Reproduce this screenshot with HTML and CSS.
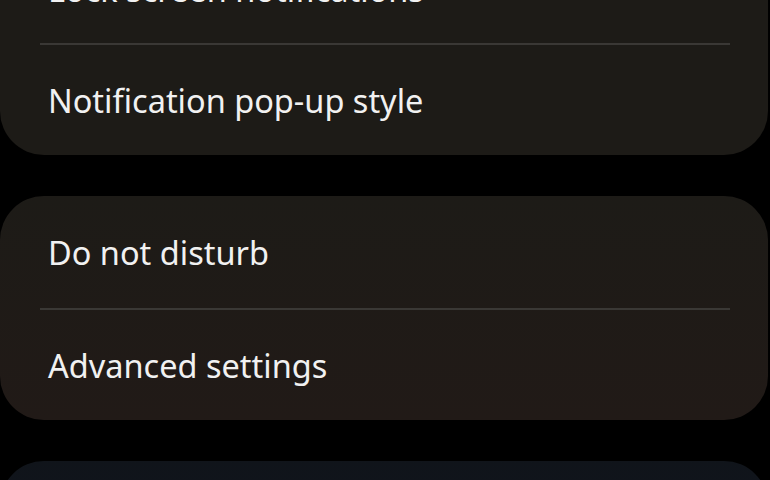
FILE: index.html
```html
<!DOCTYPE html>
<html lang="en">

<head>
    <meta charset="UTF-8">
    <title>Notifications</title>
    <link rel="stylesheet" href="styles.css">
</head>

<body>
    <div class="page">
        <section class="card card--first">
            <div class="row row--cut">Lock screen notifications</div>
            <div class="row">Notification pop-up style</div>
        </section>
        <section class="card card--warm">
            <div class="row">Do not disturb</div>
            <div class="row">Advanced settings</div>
        </section>
        <section class="card card--blue">
            <div class="row"></div>
        </section>
    </div>
</body>
</html>
```

FILE: styles.css
```css
body {
    margin: 0;
    background-color: #000000;
    font-family: 'Noto Sans', 'Open Sans', sans-serif;
    overflow: hidden;
}

.page {
    display: flex;
    flex-direction: column;
    gap: 41px;
    width: 768px;
    height: 480px;
}

.card {
    display: flex;
    flex-direction: column;
    padding: 0 38px 0 40px;
    background-color: #1d1b17;
    border-radius: 44px;
    flex-shrink: 0;
}

/* the first card is scrolled partly off the top */
.card--first {
    margin-top: -69px;
}

.card--warm {
    background: linear-gradient(#1d1b17, #211a17);
}

.card--blue {
    background: linear-gradient(#10141a, #0f1520);
}

.row {
    display: flex;
    align-items: center;
    box-sizing: border-box;
    height: 112px;
    padding-left: 8px;
    color: #f1f1f1;
    font-size: 32.5px;
}

.row--cut {
    padding-top: 4px;
}

.row + .row {
    border-top: 2px solid #3a3835;
}
```
